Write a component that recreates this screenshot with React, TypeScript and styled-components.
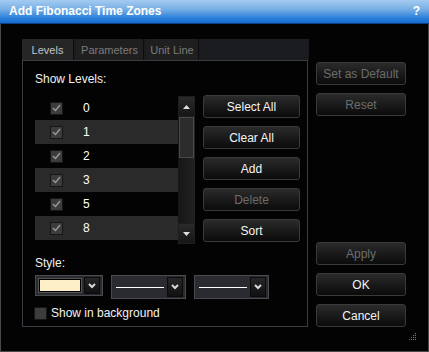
import React from "react";
import styled, { createGlobalStyle } from "styled-components";

const Global = createGlobalStyle`
  html, body { margin: 0; padding: 0; background: #000; }
  body { font-family: "Liberation Sans", Arial, sans-serif; font-size: 12px; color: #fff; }
  * { box-sizing: border-box; }
`;

const Window = styled.div`
  width: 429px;
  height: 352px;
  background: #030303;
  border: 1px solid #4a4a4a;
  border-top: none;
  display: flex;
  flex-direction: column;
  position: relative;
`;

const TitleBar = styled.div`
  height: 24px;
  margin: 0 -1px;
  background: linear-gradient(#a4cbf0 0%, #78b0e6 40%, #2c7fd9 78%, #166bd0 100%);
  display: flex;
  align-items: center;
  justify-content: space-between;
  padding: 0 9px 1px 9px;
  font-weight: bold;
  font-size: 12px;
  color: #fff;
  border-bottom: 1px solid #0a3f86;
`;

const Body = styled.div`
  flex: 1;
  display: flex;
  padding-left: 21px;
`;

const LeftCol = styled.div`
  margin-top: 15px;
  width: 287px;
  display: flex;
  flex-direction: column;
`;

const TabStrip = styled.div`
  height: 21px;
  background: #1b1c20;
  display: flex;
  gap: 2px;
`;

const Tab = styled.div<{ $active?: boolean; $w: number }>`
  width: ${(p) => p.$w}px;
  height: 21px;
  display: flex;
  align-items: center;
  justify-content: center;
  white-space: nowrap;
  font-size: 11px;
  background: ${(p) => (p.$active ? "#262626" : "#1f1f1f")};
  color: ${(p) => (p.$active ? "#c4c4c4" : "#7c7c7c")};
  border-right: 1px solid #0c0c0c;
`;

const Pane = styled.div`
  width: 286px;
  height: 267px;
  border: 1px solid #3c3c44;
  padding: 11px 0 0 12px;
  display: flex;
  flex-direction: column;
`;

const Label = styled.div`
  line-height: 14px;
  height: 14px;
  color: #f2f2f2;
  white-space: nowrap;
`;

const ListArea = styled.div`
  margin-top: 10px;
  display: flex;
  gap: 8px;
`;

const List = styled.div`
  width: 160px;
  height: 148px;
  display: flex;
`;

const Rows = styled.div`
  width: 143px;
  display: flex;
  flex-direction: column;
`;

const Row = styled.div<{ $alt?: boolean }>`
  height: 24px;
  display: flex;
  align-items: center;
  padding-left: 15px;
  background: ${(p) => (p.$alt ? "#2a2a2a" : "transparent")};
`;

const CheckBox = styled.div`
  width: 13px;
  height: 13px;
  background: #3c3c3c;
  border: 1px solid #161616;
  display: flex;
  align-items: center;
  justify-content: center;
  flex-shrink: 0;
`;

const Value = styled.div`
  margin-left: 20px;
  color: #fff;
`;

const ScrollBar = styled.div`
  width: 17px;
  height: 148px;
  background: linear-gradient(90deg, #161616, #222);
  display: flex;
  flex-direction: column;
`;

const ScrollBtn = styled.div`
  height: 21px;
  display: flex;
  align-items: center;
  justify-content: center;
  background: linear-gradient(#2a2a2a, #161616);
  border: 1px solid #1e1e1e;
`;

const Thumb = styled.div`
  height: 41px;
  margin: 0 1px;
  background: #2c2c2c;
  border: 1px solid #4a4a4a;
`;

const Track = styled.div`
  flex: 1;
`;

const BtnCol = styled.div`
  display: flex;
  flex-direction: column;
  gap: 8px;
  margin-top: -1px;
`;

const Button = styled.div<{ $disabled?: boolean; $w?: number }>`
  width: ${(p) => p.$w ?? 97}px;
  height: 23px;
  border: 1px solid #3a3a3a;
  border-radius: 3px;
  background: linear-gradient(#2b2b2b 0%, #1a1a1a 50%, #0b0b0b 100%);
  display: flex;
  align-items: center;
  justify-content: center;
  color: ${(p) => (p.$disabled ? "#6c6c6c" : "#f4f4f4")};
  font-size: 12px;
`;

const StyleLabel = styled(Label)`
  margin-top: 12px;
`;

const DropRow = styled.div`
  margin-top: 5px;
  display: flex;
  gap: 8px;
`;

const Drop = styled.div<{ $w: number; $h: number }>`
  width: ${(p) => p.$w}px;
  height: ${(p) => p.$h}px;
  border: 1px solid #4a4a4e;
  background: #2a2b30;
  display: flex;
  align-items: center;
  padding: 0 2px 0 3px;
  gap: 3px;
`;

const Swatch = styled.div`
  width: 42px;
  height: 13px;
  background: #fdf0c8;
  border: 1px solid #000;
  outline: 1px solid #555;
`;

const LineSample = styled.div`
  flex: 1;
  height: 1px;
  margin-left: 1px;
  background: #fff;
`;

const DropBtn = styled.div<{ $h: number }>`
  width: 16px;
  height: ${(p) => p.$h}px;
  background: linear-gradient(#262626, #111);
  border: 1px solid #0a0a0a;
  display: flex;
  align-items: center;
  justify-content: center;
  margin-left: auto;
`;

const BgRow = styled.div`
  margin-top: 7px;
  display: flex;
  align-items: center;
  gap: 4px;
  margin-left: -1px;
`;

const RightCol = styled.div`
  margin-left: 7px;
  margin-top: 38px;
  height: 265px;
  display: flex;
  flex-direction: column;
  justify-content: space-between;
`;

const Group = styled.div`
  display: flex;
  flex-direction: column;
  gap: 8px;
`;

const Grip = styled.svg`
  position: absolute;
  right: 11px;
  bottom: 10px;
`;

const Check = () => (
  <svg width="9" height="8" viewBox="0 0 9 8">
    <path d="M1 4 L3.5 6.5 L8 1" stroke="#9a9a9a" strokeWidth="1.4" fill="none" />
  </svg>
);

const Chevron = () => (
  <svg width="8" height="6" viewBox="0 0 8 6">
    <path d="M1 1 L4 4 L7 1" stroke="#d8d8d8" strokeWidth="2" fill="none" />
  </svg>
);

const TriUp = () => (
  <svg width="7" height="4" viewBox="0 0 7 4">
    <path d="M0 4 L3.5 0 L7 4 Z" fill="#e0e0e0" />
  </svg>
);

const TriDown = () => (
  <svg width="7" height="4" viewBox="0 0 7 4">
    <path d="M0 0 L7 0 L3.5 4 Z" fill="#e0e0e0" />
  </svg>
);

const levels = ["0", "1", "2", "3", "5", "8"];
const gripDots = [
  [6, 0], [4, 2], [6, 2], [2, 4], [4, 4], [6, 4], [0, 6], [2, 6], [4, 6], [6, 6],
];

export default function App() {
  return (
    <>
      <Global />
      <Window>
        <TitleBar>
          <span>Add Fibonacci Time Zones</span>
          <span>?</span>
        </TitleBar>
        <Body>
          <LeftCol>
            <TabStrip>
              <Tab $active $w={52}>Levels</Tab>
              <Tab $w={68}>Parameters</Tab>
              <Tab $w={53}>Unit Line</Tab>
            </TabStrip>
            <Pane>
              <Label>Show Levels:</Label>
              <ListArea>
                <List>
                  <Rows>
                    {levels.map((v, i) => (
                      <Row key={v} $alt={i % 2 === 1}>
                        <CheckBox>
                          <Check />
                        </CheckBox>
                        <Value>{v}</Value>
                      </Row>
                    ))}
                  </Rows>
                  <ScrollBar>
                    <ScrollBtn>
                      <TriUp />
                    </ScrollBtn>
                    <Thumb />
                    <Track />
                    <ScrollBtn>
                      <TriDown />
                    </ScrollBtn>
                  </ScrollBar>
                </List>
                <BtnCol>
                  <Button>Select All</Button>
                  <Button>Clear All</Button>
                  <Button>Add</Button>
                  <Button $disabled>Delete</Button>
                  <Button>Sort</Button>
                </BtnCol>
              </ListArea>
              <StyleLabel>Style:</StyleLabel>
              <DropRow>
                <Drop $w={68} $h={21}>
                  <Swatch />
                  <DropBtn $h={17}>
                    <Chevron />
                  </DropBtn>
                </Drop>
                <Drop $w={75} $h={24}>
                  <LineSample />
                  <DropBtn $h={20}>
                    <Chevron />
                  </DropBtn>
                </Drop>
                <Drop $w={75} $h={24}>
                  <LineSample />
                  <DropBtn $h={20}>
                    <Chevron />
                  </DropBtn>
                </Drop>
              </DropRow>
              <BgRow>
                <CheckBox />
                <Label>Show in background</Label>
              </BgRow>
            </Pane>
          </LeftCol>
          <RightCol>
            <Group>
              <Button $w={90} $disabled>Set as Default</Button>
              <Button $w={90} $disabled>Reset</Button>
            </Group>
            <Group>
              <Button $w={90} $disabled>Apply</Button>
              <Button $w={90}>OK</Button>
              <Button $w={90}>Cancel</Button>
            </Group>
          </RightCol>
        </Body>
        <Grip width="8" height="8" viewBox="0 0 8 8">
          {gripDots.map(([x, y], i) => (
            <rect key={i} x={x} y={y} width="1" height="1" fill="#777" />
          ))}
        </Grip>
      </Window>
    </>
  );
}
